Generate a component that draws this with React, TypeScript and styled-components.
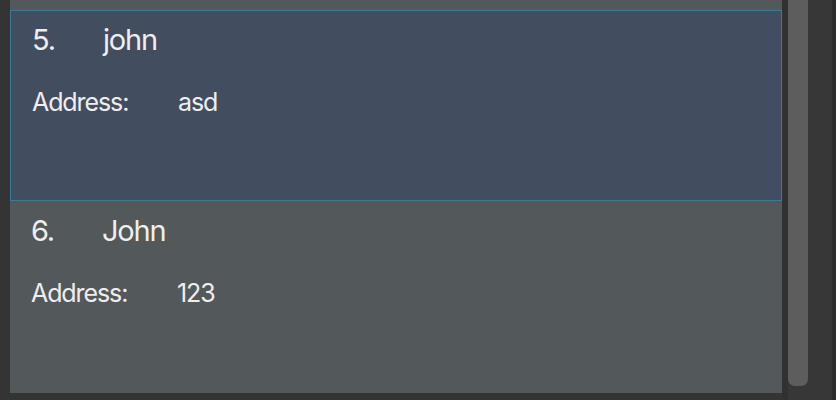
import styled, { createGlobalStyle } from "styled-components";

const GlobalStyle = createGlobalStyle`
  html, body {
    margin: 0;
    padding: 0;
    background: #343434;
  }
  body {
    font-family: Inter, "Liberation Sans", sans-serif;
  }
`;

const Window = styled.div`
  display: flex;
  width: 836px;
  height: 400px;
  overflow: hidden;
  background: #343434;
  border-right: 4px solid #2c2c2c;
  box-sizing: border-box;
`;

const ListView = styled.div`
  display: flex;
  flex-direction: column;
  width: 772px;
  height: 393px;
  margin-left: 10px;
  overflow: hidden;
  background: #53585a;
`;

const PrevCellTail = styled.div`
  height: 10px;
  flex-shrink: 0;
  background: #53585a;
`;

const Cell = styled.div<{ $selected?: boolean }>`
  display: flex;
  flex-direction: column;
  gap: 30px;
  flex-shrink: 0;
  box-sizing: border-box;
  height: 191px;
  color: #eeeeee;
  background: ${(p) => (p.$selected ? "#424d5f" : "#53585a")};
  border: ${(p) => (p.$selected ? "1px solid #3a7c91" : "none")};
  padding: ${(p) => (p.$selected ? "12px 21px" : "13px 21px")};
`;

const NameRow = styled.div`
  display: grid;
  grid-template-columns: 71px auto;
  font-size: 29px;
  line-height: 34px;
  letter-spacing: -1.2px;
`;

const FieldRow = styled.div`
  display: grid;
  grid-template-columns: 146px auto;
  font-size: 25px;
  line-height: 30px;
  letter-spacing: -1.1px;
`;

const ScrollBar = styled.div`
  width: 44px;
  height: 400px;
  border-left: 6px solid #313131;
  background: #373737;
`;

const Thumb = styled.div`
  width: 20px;
  height: 386px;
  background: #5d5d5d;
  border-radius: 0 0 7px 7px;
`;

const persons = [
  { index: 5, name: "john", address: "asd" },
  { index: 6, name: "John", address: "123" },
];

export default function App() {
  const selected = 5;
  return (
    <>
      <GlobalStyle />
      <Window>
        <ListView>
          <PrevCellTail />
          {persons.map((p) => (
            <Cell key={p.index} $selected={p.index === selected}>
              <NameRow>
                <span>{p.index}.</span>
                <span>{p.name}</span>
              </NameRow>
              <FieldRow>
                <span>Address:</span>
                <span>{p.address}</span>
              </FieldRow>
            </Cell>
          ))}
        </ListView>
        <ScrollBar>
          <Thumb />
        </ScrollBar>
      </Window>
    </>
  );
}
